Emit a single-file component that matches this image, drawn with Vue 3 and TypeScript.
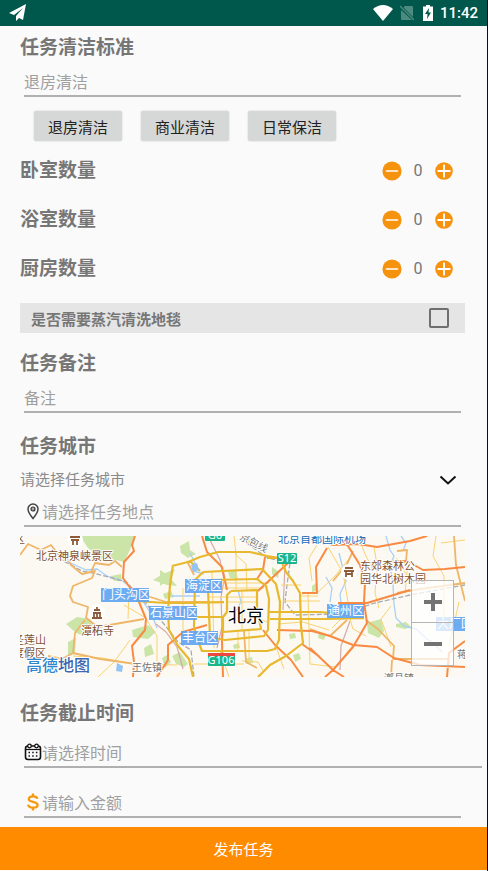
<script setup lang="ts">
import { ref } from 'vue'

interface Counter {
  key: string
  label: string
  count: number
}

interface District {
  name: string
  x: number
  y: number
  w: number
}

interface Road {
  kind: string
  d: string
}

const standard = ref('')
const presets: string[] = ['退房清洁', '商业清洁', '日常保洁']
const counters = ref<Counter[]>([
  { key: 'bedroom', label: '卧室数量', count: 0 },
  { key: 'bathroom', label: '浴室数量', count: 0 },
  { key: 'kitchen', label: '厨房数量', count: 0 },
])
const steam = ref(false)
const note = ref('')
const city = ref('')
const place = ref('')
const deadline = ref('')
const amount = ref('')

function step(item: Counter, by: number): void {
  item.count = Math.max(0, item.count + by)
}

const parks: string[] = [
  'M60 0H114L110 14L104 26L96 24L86 26L76 18L68 12Z',
  'M46 88L57 81L70 83L77 94L64 100L56 97Z',
  'M48 106L56 102L55 118L48 119Z',
  'M133 44L143 38L155 33L151 43L157 50L147 49Z',
  'M112 94L128 89L136 96L128 103L113 101Z',
  'M124 112L131 108L134 118L125 121Z',
  'M160 10L169 5L170 14L176 18L168 22L161 17Z',
  'M152 120L160 116L168 128L164 131L156 128Z',
  'M347 87L361 83L364 95L359 102L348 97Z',
  'M376 88L386 86L391 91L385 93L376 91Z',
  'M143 58L151 55L154 61L145 63Z',
  'M208 36L216 34L218 43L210 42Z',
  'M252 31L259 36L258 42L252 38Z',
  'M292 50L296 47L297 55L292 56Z',
  'M213 109L219 107L220 112L214 113Z',
  'M350 27L357 26L359 33L352 34Z',
  'M227 4L235 2L236 9L229 10Z',
  'M91 40L101 38L102 45L94 45Z',
  'M299 96L306 98L304 104L298 102Z',
  'M269 98L275 97L276 102L270 103Z',
  'M225 123L232 121L233 127L226 128Z',
  'M140 34L146 38L144 47L140 50Z',
  'M142 122L147 119L151 126L145 132Z',
  'M273 119L279 117L281 123L275 126Z',
]

const roads: Road[] = [
  { kind: 'river', d: 'M38 22L55 29L66 34L77 33L87 40L103 45L118 58L132 79L137 92' },
  { kind: 'river', d: 'M366 0L370 14L374 20L370 30L373 48L374 68L376 82L384 90L396 93L407 103L413 107L422 116' },
  { kind: 'river', d: 'M170 17L175 27L173 35L184 38M218 54L221 66L216 75M319 17L326 45L320 58L323 84M306 41L312 52L310 66M381 0L386 7L383 15M152 60H180' },
  { kind: 'rail', d: 'M38 22L62 35L73 37L92 42L106 46L120 60L132 75L144 88L158 106L171 114L174 141M221 3L235 13L248 22L270 27L267 49L265 66L275 79L320 78L355 67L390 59L445 49' },
  { kind: 'pink', d: 'M190 4L200 24L204 44L201 61L202 91L197 112M136 88L146 96L157 111L163 133M265 29L263 74M330 85L321 110L320 134' },
  { kind: 'minor', d: 'M214 0L216 19L226 28L227 54M188 52H244M174 47H249M188 61H237M216 16V54M222 54V95M207 66H237M150 67H204M163 52V101M192 36L194 112M218 95V115M229 94V125M281 60H298M288 58L290 128M297 9L289 22L292 45M308 11L323 37L328 66M312 92L322 82L344 83M329 80L333 93L346 100M354 11L357 29L355 57L359 72M371 70L361 83L371 111M416 0L413 20L424 40L424 92M439 66L430 106M388 27L385 57M290 128L316 131L333 109M174 128H224M200 115L209 141M255 108L264 133M109 55L108 83M104 69L126 82M110 104L94 126L78 141M126 83L137 100L137 141M53 120L83 122L112 128L157 129' },
  { kind: 'minor', d: 'M237 82L247 86M222 125L238 126L244 136M297 57L315 40L328 24M340 5L345 18L351 30M423 92L445 88M421 7L445 4M376 22L390 44M261 49L281 49M263 65H300M258 88L283 86L309 94' },
  { kind: 'soft', d: 'M0 19L8 8L21 14L31 9L38 18L47 21L51 29L62 38L75 35L72 42L53 50L50 60L53 66L68 71L66 82L78 91L95 88L124 83M71 36L75 27L89 29L95 25L102 31M65 84L55 97L53 117L42 123L28 120M53 117L80 123L116 128M116 53L124 59L146 66L188 66M434 0L436 29L445 65M377 57L400 53L445 47M346 84L359 94L374 110L373 123L428 123M290 93L310 100L327 84M224 95L226 126L237 132M333 15L327 28L313 45M167 25L174 39M372 124L371 141M377 15L387 14L386 26L375 28' },
  { kind: 'major', d: 'M115 0L112 9L114 15L104 26L103 42L117 61L126 83L125 94L112 110L114 126L113 141M182 0L187 16L202 31L207 54M245 21L243 34L237 43M268 27L238 55M282 57H297L296 31L307 12M300 0L312 9L338 8L357 11L390 5L407 0M316 0L328 10L340 29L345 47L344 66L347 87L333 111L313 134L305 141M318 67H347L377 58L390 54M368 26L387 25L403 34L425 33L445 31M257 94L292 95L310 100L333 109L357 111L374 122L400 129L445 131M243 94L255 109L271 124L283 141M203 82L202 105L203 141M187 89L163 96L148 109L148 124L137 141M290 112L313 134L324 141M445 105L429 117L427 141M282 108L300 121' },
  { kind: 'ring', d: 'M116 65L146 67L204 66M152 30L168 26L180 21L198 16L230 16L247 20L260 22L266 36L273 45L280 57L281 90L283 107L266 120L250 129L238 141M153 29L150 49L148 75L149 94L158 110L169 123L173 141M170 25L180 35M183 36L242 33L256 48L260 66L259 104L255 113L247 115H182L177 102L174 91L175 44L183 36M190 44L237 43L246 50L249 63L248 94L244 100L205 104L190 101L188 53L190 44M211 55L237 54V73L241 93L203 96V81L207 76V59L211 55M150 81H203M248 76H300L331 79M250 83H307L344 82M260 22H247' },
]

const districts: District[] = [
  { name: '门头沟区', x: 81, y: 52, w: 48 },
  { name: '石景山区', x: 129, y: 70, w: 48 },
  { name: '海淀区', x: 165, y: 43, w: 37 },
  { name: '丰台区', x: 161, y: 95, w: 37 },
  { name: '通州区', x: 307, y: 68, w: 37 },
  { name: '大厂回族', x: 416, y: 81, w: 48 },
]
</script>

<template>
  <main class="page">
    <header class="status">
      <svg class="plane" viewBox="0 0 18 18" aria-hidden="true">
        <path d="M17 0L0 9L5 11L14 4L7 12V17L10 14L14 16Z" fill="#fff" />
      </svg>
      <div class="status-right">
        <svg class="wifi" viewBox="0 0 20 16" aria-hidden="true">
          <path d="M0 4Q10 -4 20 4L10 16Z" fill="#fff" />
        </svg>
        <svg class="sim" viewBox="0 0 14 16" aria-hidden="true">
          <path d="M5 1H12Q13 1 13 2V12L3.500 2.500ZM1 5L12 15H2Q1 15 1 14Z" fill="#4d8a80" />
          <path d="M0 1L14 15" stroke="#4d8a80" stroke-width="1.300" />
        </svg>
        <svg class="battery" viewBox="0 0 10 16" aria-hidden="true">
          <path d="M3 0H7V1.500H10V16H0V1.500H3Z" fill="#fff" />
          <path d="M6 3L2 9H4.600L4 14L8 7.500H5.500Z" fill="#00574b" />
        </svg>
        <time>11:42</time>
      </div>
    </header>

    <form class="form" @submit.prevent>
      <label class="title" for="standard">任务清洁标准</label>
      <div class="field">
        <input id="standard" v-model="standard" type="text" placeholder="退房清洁" />
      </div>
      <div class="presets">
        <button v-for="p in presets" :key="p" type="button" class="preset" @click="standard = p">{{ p }}</button>
      </div>

      <div class="counters">
        <div v-for="c in counters" :key="c.key" class="counter">
          <span class="title">{{ c.label }}</span>
          <div class="stepper">
            <button type="button" :aria-label="c.label + '减少'" @click="step(c, -1)">
              <svg viewBox="0 0 20 20"><circle cx="10" cy="10" r="9.600" fill="#f5930f" /><path d="M4.500 10H15.500" stroke="#fff" stroke-width="1.600" stroke-linecap="round" /></svg>
            </button>
            <output>{{ c.count }}</output>
            <button type="button" :aria-label="c.label + '增加'" @click="step(c, 1)">
              <svg viewBox="0 0 20 20"><circle cx="10" cy="10" r="8.800" fill="#f5930f" /><path d="M3.500 10H16.500M10 3.500V16.500" stroke="#fff" stroke-width="1.800" /></svg>
            </button>
          </div>
        </div>
      </div>

      <label class="steam">
        <span>是否需要蒸汽清洗地毯</span>
        <input v-model="steam" type="checkbox" />
      </label>

      <label class="title note-title" for="note">任务备注</label>
      <div class="field">
        <input id="note" v-model="note" type="text" placeholder="备注" />
      </div>

      <label class="title city-title" for="city">任务城市</label>
      <div class="select">
        <select id="city" v-model="city">
          <option value="">请选择任务城市</option>
          <option value="北京">北京</option>
        </select>
        <svg viewBox="0 0 18 10" aria-hidden="true"><path d="M1.500 1.500L9 8.500L16.500 1.500" fill="none" stroke="#111" stroke-width="2" /></svg>
      </div>
      <div class="field place">
        <svg viewBox="0 0 18 18" aria-hidden="true">
          <path d="M9 16.500C6.500 13.500 4 10.500 4 7A5 5 0 0 1 14 7C14 10.500 11.500 13.500 9 16.500Z" fill="none" stroke="#444" stroke-width="1.500" />
          <circle cx="9" cy="7" r="2" fill="#aaa" stroke="#333" stroke-width="1.200" />
        </svg>
        <input v-model="place" type="text" placeholder="请选择任务地点" aria-label="任务地点" />
      </div>

      <div class="map">
        <svg class="tiles" viewBox="0 0 445 141" preserveAspectRatio="xMidYMid slice" role="img" aria-label="北京地图">
          <rect width="445" height="141" fill="#fcf9f2" />
          <path v-for="(d, i) in parks" :key="'p' + i" :d="d" class="park" />
          <path v-for="(r, i) in roads" :key="'r' + i" :d="r.d" :class="['road', r.kind]" />
          <path d="M97 127L103 130L102 136L96 135ZM171 29L177 27L179 34L173 36Z" fill="#92c5f5" />

          <g class="poi">
            <circle cx="55" cy="4" r="8" />
            <path d="M50 1H60M51 4H59M53 4V9M57 4V9" />
            <circle cx="77" cy="77" r="8" />
            <path d="M77 71V73M74 74H80M73 77H81M74 77V81M80 77V81M72 82H82M77 77V82" />
            <circle cx="329" cy="36" r="8" />
            <path d="M325 32H333M324 35H334M326 36V41M332 36V41M326 38H332" />
          </g>

          <g v-for="d in districts" :key="d.name">
            <rect :x="d.x" :y="d.y" :width="d.w" height="14" fill="#5da3f3" fill-opacity=".9" />
            <text :x="d.x + 1" :y="d.y + 11" class="district">{{ d.name }}</text>
          </g>

          <rect x="185" y="-8" width="20" height="13" rx="1" fill="#1cb58b" />
          <text x="195" y="3" class="shield">G6</text>
          <rect x="257" y="17" width="20" height="11" rx="1" fill="#1cb58b" />
          <text x="267" y="26" class="shield">S12</text>
          <rect x="188" y="118" width="27" height="12" rx="1" fill="#1cb58b" />
          <rect x="188" y="117" width="27" height="3" fill="#e9493e" />
          <text x="201" y="128" class="shield">G106</text>

          <g class="scenic">
            <text x="-6" y="7">区</text>
            <text x="16" y="24">北京神泉峡景区</text>
            <text x="61" y="99">潭柘寺</text>
            <text x="-7" y="108">圣莲山</text>
            <text x="-7" y="121">度假区</text>
            <text x="340" y="34">东郊森林公</text>
            <text x="340" y="47">园华北树木园</text>
          </g>
          <g class="town">
            <text x="112" y="135">王佐镇</text>
            <text x="364" y="146">漷县镇</text>
            <text x="437" y="122">蒋</text>
            <text x="219" y="3" transform="rotate(27 219 3)">京包线</text>
          </g>
          <text x="258" y="7" class="airport">北京首都国际机场</text>
          <text x="208" y="86" class="capital">北京</text>
          <text x="6" y="135" class="brand">高德<tspan fill="#3d67b0">地图</tspan></text>
        </svg>
        <div class="zoom">
          <button type="button" aria-label="放大"><svg viewBox="0 0 18 18"><path d="M0 9H18M9 0V18" stroke="#737373" stroke-width="4" /></svg></button>
          <button type="button" aria-label="缩小"><svg viewBox="0 0 18 18"><path d="M0 9H18" stroke="#737373" stroke-width="4" /></svg></button>
        </div>
      </div>

      <label class="title time-title" for="deadline">任务截止时间</label>
      <div class="field deadline">
        <svg viewBox="0 0 18 18" aria-hidden="true">
          <rect x="1.500" y="3" width="15" height="13.500" rx="2.500" fill="none" stroke="#111" stroke-width="1.600" />
          <path d="M2 6.500H16" stroke="#111" stroke-width="1.200" />
          <circle cx="5.500" cy="3" r="1.800" fill="#fff" stroke="#111" stroke-width="1.300" />
          <circle cx="12.500" cy="3" r="1.800" fill="#fff" stroke="#111" stroke-width="1.300" />
          <path d="M4.500 9.500H14M4.500 13H14" stroke="#111" stroke-width="1.500" stroke-dasharray="1.500 2.200" />
        </svg>
        <input id="deadline" v-model="deadline" type="text" placeholder="请选择时间" />
      </div>
      <div class="field amount">
        <svg viewBox="0 0 18 18" aria-hidden="true">
          <path d="M13.500 5.800C13 3.800 11.200 3.300 9 3.300C6.500 3.300 4.800 4.300 4.800 6C4.800 10 13.600 7.500 13.600 12C13.600 13.800 11.600 14.700 9 14.700C6.500 14.700 4.500 13.800 4.200 11.700M9 0.500V4M9 14V17.500" fill="none" stroke="#f5990f" stroke-width="2.300" />
        </svg>
        <input v-model="amount" type="text" inputmode="decimal" placeholder="请输入金额" aria-label="金额" />
      </div>

      <button type="submit" class="submit">发布任务</button>
    </form>
  </main>
</template>

<style>
body {
  margin: 0;
  background: #fafafa;
}
</style>

<style scoped>
.page {
  box-sizing: border-box;
  min-height: 100vh;
  border-right: 1px solid #0b0b24;
  background: #fafafa;
  color: #767676;
  font-family: Roboto, "Noto Sans CJK SC", sans-serif;
}

button,
input,
select {
  margin: 0;
  padding: 0;
  border: 0;
  background: none;
  color: inherit;
  font-family: inherit;
}

svg {
  display: block;
}

.status {
  display: flex;
  align-items: center;
  justify-content: space-between;
  height: 26px;
  padding: 0 9px;
  background: #00574b;
}

.plane {
  width: 18px;
  height: 18px;
}

.status-right {
  display: flex;
  align-items: center;
  gap: 7px;
  color: #fff;
  font-size: 15px;
  font-weight: 500;
  line-height: 28px;
}

.wifi {
  width: 20px;
  height: 16px;
}

.sim {
  width: 14px;
  height: 16px;
}

.battery {
  width: 10px;
  height: 16px;
  margin-left: 2px;
}

.form {
  display: flex;
  flex-direction: column;
  padding: 8px 22px 1px 20px;
}

.title {
  font-size: 19px;
  font-weight: 700;
  line-height: 28px;
}

.field {
  display: flex;
  align-items: center;
  box-sizing: border-box;
  height: 30px;
  margin: 5px 4px 0;
  border-bottom: 2px solid #b0b0b0;
}

.field svg {
  flex: none;
  width: 18px;
  height: 18px;
}

.field input {
  flex: 1;
  box-sizing: border-box;
  min-width: 0;
  height: 28px;
  padding-top: 2px;
  font-size: 16px;
  outline: 0;
}

.field input::placeholder {
  color: #a0a0a0;
  opacity: 1;
}

.presets {
  display: flex;
  gap: 19px;
  margin: 14px 0 0 14px;
}

.preset {
  width: 88px;
  height: 30px;
  border-radius: 2px;
  background: #d6d7d7;
  box-shadow: 0 0 2px rgba(0, 0, 0, 0.2);
  color: #212121;
  font-size: 15px;
}

.counters {
  margin-top: 5px;
}

.counter {
  display: flex;
  align-items: center;
  justify-content: space-between;
  height: 49px;
}

.stepper {
  display: flex;
  align-items: center;
  gap: 11px;
  margin-right: 11px;
}

.stepper button,
.stepper svg {
  width: 20px;
  height: 20px;
}

.stepper output {
  width: 10px;
  font-size: 16px;
  line-height: 20px;
  text-align: center;
}

.steam {
  display: flex;
  align-items: center;
  justify-content: space-between;
  height: 30px;
  margin-top: 10px;
  padding: 0 16px 0 11px;
  background: #e5e5e5;
  font-size: 15px;
  font-weight: 700;
}

.steam input {
  appearance: none;
  box-sizing: border-box;
  width: 20px;
  height: 20px;
  border: 2px solid #6f6f6f;
  border-radius: 2px;
}

.steam input:checked {
  background: #f5930f;
}

.note-title {
  margin-top: 17px;
}

.city-title {
  margin-top: 20px;
}

.select {
  display: grid;
  align-items: center;
  height: 28px;
  margin-top: 5px;
}

.select select,
.select svg {
  grid-area: 1 / 1;
}

.select select {
  appearance: none;
  height: 28px;
  color: #8a8a8a;
  font-size: 15px;
}

.select svg {
  justify-self: end;
  width: 18px;
  height: 10px;
  margin-right: 8px;
  pointer-events: none;
}

.place {
  margin-top: 3px;
}

.map {
  position: relative;
  height: 141px;
  margin-top: 9px;
  overflow: hidden;
}

.tiles {
  width: 100%;
  height: 100%;
  font-family: "Noto Sans CJK SC", sans-serif;
}

.park {
  fill: #cbe4a8;
}

.road {
  fill: none;
  stroke-linejoin: round;
}

.river {
  stroke: #a9d0f8;
  stroke-width: 1.3;
}

.rail {
  stroke: #a7abb3;
  stroke-width: 1.3;
  stroke-dasharray: 5 2;
}

.pink {
  stroke: #d5a9aa;
  stroke-width: 1.2;
}

.minor {
  stroke: #f9d371;
  stroke-width: 1;
}

.soft {
  stroke: #efb568;
  stroke-width: 1.8;
}

.major {
  stroke: #f98a43;
  stroke-width: 2;
}

.ring {
  stroke: #e8b92e;
  stroke-width: 2.2;
}

.poi path {
  fill: none;
  stroke: #8f5c3b;
  stroke-width: 1.8;
}

.poi circle {
  fill: #fff;
}

.district {
  fill: #fff;
  font-size: 12px;
}

.shield {
  fill: #fff;
  font-family: "Noto Sans", sans-serif;
  font-size: 11px;
  text-anchor: middle;
}

.scenic,
.town,
.airport,
.capital,
.brand {
  stroke: #fff;
  stroke-width: 2;
  stroke-linejoin: round;
  paint-order: stroke;
}

.scenic {
  fill: #83512f;
  font-size: 11px;
}

.town {
  fill: #737373;
  font-size: 10px;
}

.airport {
  fill: #1767b5;
  font-size: 11px;
}

.capital {
  fill: #000;
  font-size: 18px;
}

.brand {
  fill: #3086ce;
  font-size: 16px;
  font-weight: 500;
}

.zoom {
  position: absolute;
  right: 11px;
  bottom: 11px;
  display: flex;
  flex-direction: column;
}

.zoom button {
  display: grid;
  place-items: center;
  box-sizing: border-box;
  width: 43px;
  height: 43px;
  border: 1px solid #b5b5b5;
  background: rgba(255, 255, 255, 0.75);
}

.zoom button + button {
  border-top: 0;
}

.zoom svg {
  width: 18px;
  height: 18px;
}

.time-title {
  margin-top: 23px;
}

.deadline {
  margin: 10px -17px 0 4px;
}

.amount {
  margin-top: 20px;
}

.submit {
  height: 43px;
  margin: 9px -22px 0 -20px;
  background: #ff8c00;
  color: #fff;
  font-size: 15px;
}
</style>
